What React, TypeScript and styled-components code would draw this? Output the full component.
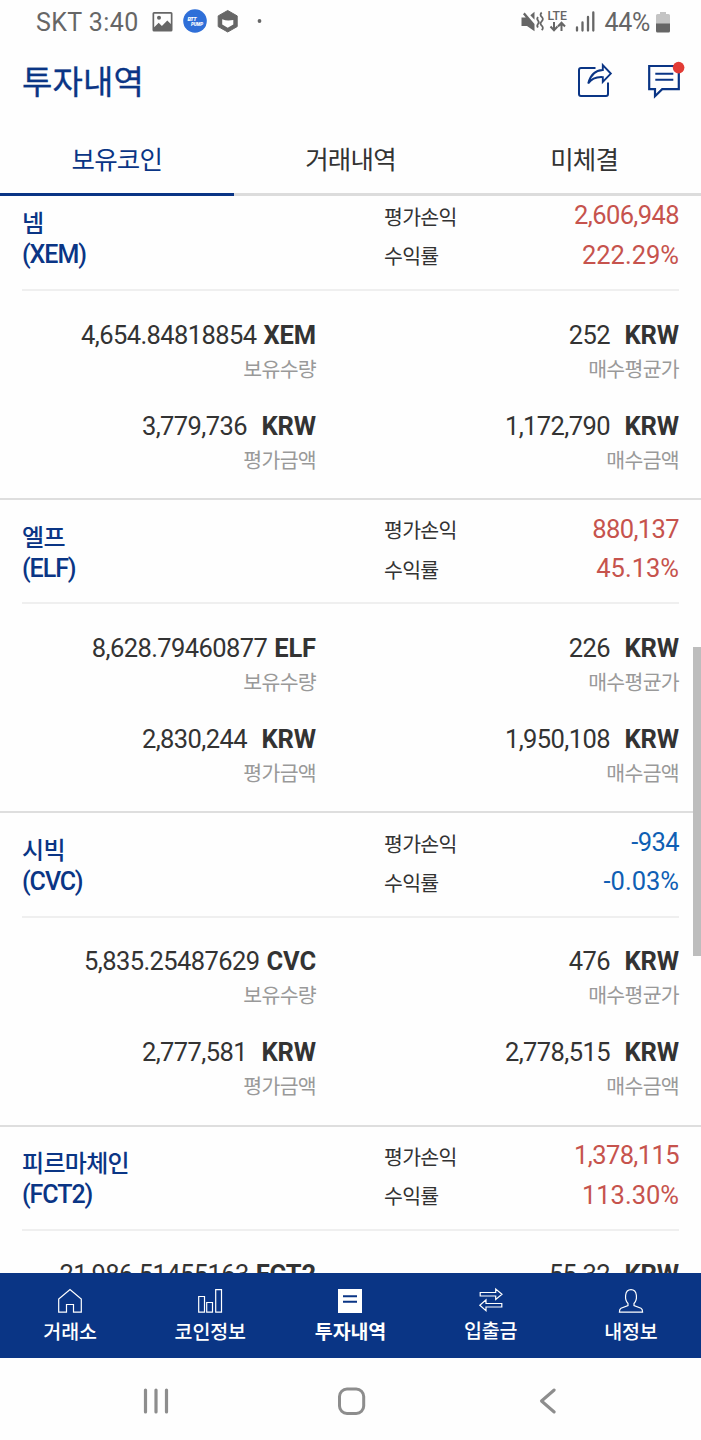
import React from 'react';
import styled, { createGlobalStyle } from 'styled-components';

const NAVY = '#0a3585';

const GlobalStyle = createGlobalStyle`
  * { box-sizing: border-box; }
  html, body { margin: 0; padding: 0; background: #fefefe; }
  body { font-family: Roboto, "Noto Sans CJK KR", sans-serif; color: #333; overflow: hidden; }
`;

const Screen = styled.div`
  position: relative;
  width: 701px;
  height: 1440px;
  display: flex;
  flex-direction: column;
  background: #fefefe;
  overflow: hidden;
`;

const StatusBar = styled.div`
  height: 44px;
  flex: none;
  display: flex;
  align-items: center;
  justify-content: space-between;
  padding: 0 31px 0 36px;
  color: #666;
  font-size: 25px;
  line-height: 44px;
`;

const StatusGroup = styled.div`
  display: flex;
  align-items: center;
  height: 44px;
  svg { display: block; flex: none; }
`;

const Carrier = styled.span`
  margin-right: 13px;
  padding-top: 2px;
  letter-spacing: 0.42px;
  white-space: pre;
`;

const BatteryLevel = styled.span`
  margin: 0 6px 0 7px;
  padding-top: 2px;
  letter-spacing: -0.3px;
`;

const Header = styled.header`
  height: 80px;
  flex: none;
  display: flex;
  justify-content: space-between;
  align-items: flex-start;
  padding: 0 15px 0 22px;
`;

const Title = styled.h1`
  margin: 17px 0 0;
  font-size: 33px;
  line-height: 44px;
  font-weight: 400;
  letter-spacing: 0.1px;
  color: ${NAVY};
  -webkit-text-stroke: 0.3px ${NAVY};
`;

const HeaderActions = styled.div`
  display: flex;
  gap: 33px;
  padding-top: 14px;
  svg { display: block; }
`;

const Tabs = styled.nav`
  height: 72px;
  flex: none;
  display: grid;
  grid-template-columns: repeat(3, 1fr);
`;

const Tab = styled.div<{ $active?: boolean }>`
  padding-top: 3px;
  border-bottom: 3px solid ${p => (p.$active ? NAVY : '#dcdcdc')};
  color: ${p => (p.$active ? NAVY : '#333')};
  text-align: center;
  font-size: 25.5px;
  line-height: 66px;
  letter-spacing: -0.8px;
`;

const ListArea = styled.main`
  flex: 1;
  min-height: 0;
  overflow: hidden;
`;

const CoinList = styled.div`
  margin-top: -9.33px;
`;

const Card = styled.section`
  height: 313.33px;
  border-bottom: 2px solid #dedede;
`;

const Summary = styled.div`
  height: 104.33px;
  margin: 0 22px;
  border-bottom: 2px solid #efefef;
  display: grid;
  grid-template-columns: 362px 1fr auto;
`;

const CoinName = styled.div`
  padding-top: 22.5px;
  color: ${NAVY};
  font-size: 24px;
  line-height: 31px;
  font-weight: 500;
  letter-spacing: -0.7px;
`;

const CoinCode = styled.div`
  font-size: 25px;
  line-height: 30px;
  letter-spacing: -1.05px;
`;

const Labels = styled.div`
  padding-top: 12.3px;
  font-size: 20.5px;
  line-height: 39.5px;
  letter-spacing: -0.7px;
`;

const Results = styled.div<{ $loss?: boolean }>`
  padding-top: 9.5px;
  text-align: right;
  font-size: 25.5px;
  line-height: 39.5px;
  color: ${p => (p.$loss ? '#0f5fb4' : '#c6534d')};
`;

const Profit = styled.div`
  letter-spacing: -0.6px;
`;

const Rate = styled.div`
  letter-spacing: 0;
`;

const Details = styled.div`
  display: grid;
  grid-template-columns: 294px 1fr;
  row-gap: 21px;
  padding: 25.5px 22px 0;
  text-align: right;
`;

const Amount = styled.div`
  font-size: 25.5px;
  line-height: 36px;
  letter-spacing: -0.6px;
  white-space: nowrap;
`;

const Unit = styled.b<{ $wide?: boolean }>`
  margin-left: ${p => (p.$wide ? 14.5 : 7)}px;
  font-weight: 700;
  letter-spacing: -0.1px;
`;

const Caption = styled.div`
  font-size: 20.5px;
  line-height: 34px;
  letter-spacing: -0.7px;
  color: #999;
`;

const ScrollThumb = styled.div`
  position: absolute;
  right: 0;
  top: 647px;
  width: 8px;
  height: 309px;
  background: #bdbdbd;
`;

const BottomNav = styled.nav`
  height: 85px;
  flex: none;
  display: grid;
  grid-template-columns: repeat(5, 1fr);
  background: ${NAVY};
`;

const NavItem = styled.div<{ $active?: boolean; $raised?: boolean }>`
  display: flex;
  flex-direction: column;
  align-items: center;
  padding-top: ${p => (p.$raised ? 13 : 14)}px;
  color: #fff;
  font-size: 19.5px;
  line-height: 32px;
  letter-spacing: -0.1px;
  font-weight: ${p => (p.$active ? 700 : 500)};
  svg { display: block; margin-bottom: 2px; }
`;

const SystemBar = styled.div`
  height: 82px;
  flex: none;
  display: grid;
  grid-template-columns: 195px 1fr 195px;
  justify-content: center;
  align-items: center;
  padding: 4px 58px 0;
  svg { display: block; margin: 0 auto; }
`;

type Coin = {
  name: string; code: string; profit: string; rate: string; loss?: boolean;
  amount: string; average: string; value?: string; cost?: string;
};

const coins: Coin[] = [
  { name: '넴', code: 'XEM', profit: '2,606,948', rate: '222.29%', amount: '4,654.84818854', average: '252', value: '3,779,736', cost: '1,172,790' },
  { name: '엘프', code: 'ELF', profit: '880,137', rate: '45.13%', amount: '8,628.79460877', average: '226', value: '2,830,244', cost: '1,950,108' },
  { name: '시빅', code: 'CVC', profit: '-934', rate: '-0.03%', loss: true, amount: '5,835.25487629', average: '476', value: '2,777,581', cost: '2,778,515' },
  { name: '피르마체인', code: 'FCT2', profit: '1,378,115', rate: '113.30%', amount: '21,986.51455163', average: '55.32' },
];

const Detail = ({ amount, unit, wide, caption }: { amount: string; unit: string; wide?: boolean; caption?: string }) => (
  <div>
    <Amount>{amount}<Unit $wide={wide}>{unit}</Unit></Amount>
    {caption && <Caption>{caption}</Caption>}
  </div>
);

const CoinCard = ({ coin }: { coin: Coin }) => (
  <Card>
    <Summary>
      <CoinName>{coin.name}<CoinCode>({coin.code})</CoinCode></CoinName>
      <Labels><div>평가손익</div><div>수익률</div></Labels>
      <Results $loss={coin.loss}><Profit>{coin.profit}</Profit><Rate>{coin.rate}</Rate></Results>
    </Summary>
    <Details>
      <Detail amount={coin.amount} unit={coin.code} caption={coin.value && '보유수량'} />
      <Detail amount={coin.average} unit="KRW" wide caption={coin.value && '매수평균가'} />
      {coin.value && <Detail amount={coin.value} unit="KRW" wide caption="평가금액" />}
      {coin.cost && <Detail amount={coin.cost} unit="KRW" wide caption="매수금액" />}
    </Details>
  </Card>
);

const StatusLeftIcons = () => (
  <svg width="112" height="30" viewBox="0 0 112 30">
    <path fill="#666" fillRule="evenodd" d="M2 5h17q1.500 0 1.500 1.500v16.500q0 1.500-1.500 1.500H2q-1.500 0-1.500-1.500V6.500Q.5 5 2 5zM2.200 6.700v13.600l4.500-4.500 3.200 3.100 5.400-5.500 3.500 3.500V6.700zM7 8.800a2 2 0 1 1 0 4 2 2 0 0 1 0-4z" />
    <circle cx="43" cy="14" r="11.800" fill="#2f6fd8" />
    <text x="35.500" y="13.500" fill="#fff" fontSize="5.500" fontWeight="900" fontStyle="italic" textLength="9">BTT</text>
    <text x="39" y="19" fill="#fff" fontSize="4.500" fontWeight="900" fontStyle="italic" textLength="12">PUMP</text>
    <path d="M75.700 3.500l9.500 5.400v10.700l-9.500 5.400-9.500-5.400V8.900z" fill="#666" stroke="#666" strokeWidth="1" strokeLinejoin="round" />
    <path d="M70.200 12.300q3.500 1.300 6.300 1.200 2.500-.4 4.800-.4v4.400l-5.600 3.200-5.500-3.200z" fill="#fefefe" />
    <circle cx="107.500" cy="14" r="1.900" fill="#666" />
  </svg>
);

const StatusRightIcons = () => (
  <svg width="76" height="30" viewBox="0 0 76 30" fill="none">
    <path d="M.5 10.500h4.300L2 7.200l1.700-1.700L13.500 17v7.300L6 19H.5z" fill="#666" />
    <path d="M9.300 8.300l4.200-3.500v8z" fill="#666" />
    <path d="M17 10q-1.500 1.800 0 3.500t0 3.500 0 3.500M20.700 5.500q-2.300 2.200 0 4.400t0 4.400 0 4.400 0 4.400" stroke="#666" strokeWidth="1.800" />
    <text x="26.500" y="13" fill="#666" fontSize="13" fontWeight="500" textLength="19.500" lengthAdjust="spacingAndGlyphs">LTE</text>
    <path d="M33 15v8M29.500 19.500l3.500 3.800 3.500-3.800M40.500 24v-8M37 19.500l3.500-3.800 3.500 3.800" stroke="#666" strokeWidth="2" />
    <path d="M56 20.500v3M61.500 15.500v8M67 10v13.500M72.300 5.500v18" stroke="#666" strokeWidth="2.300" strokeLinecap="round" />
  </svg>
);

const Battery = () => (
  <svg width="14" height="22" viewBox="0 0 14 22">
    <path d="M4 3V1h6v2h2.500Q14 3 14 4.500V13H0V4.500Q0 3 1.500 3z" fill="#c4c4c4" />
    <path d="M0 12.500h14v7.500q0 1.500-1.500 1.500h-11Q0 21.500 0 20z" fill="#666" />
  </svg>
);

const ShareIcon = () => (
  <svg width="36" height="42" viewBox="0 0 36 42" fill="none" stroke={NAVY} strokeWidth="2">
    <path d="M18.500 10H4Q2 10 2 12v24q0 2 2 2h25q2 0 2-2V24.500" strokeLinejoin="round" />
    <path d="M11.200 25.500Q14.500 12.500 25.800 12V7.200l8 8.400-8 8.200v-4.700q-10-.6-14.600 6.400z" strokeWidth="1.900" />
  </svg>
);

const NoticeIcon = () => (
  <svg width="40" height="42" viewBox="0 0 40 42" fill="none">
    <path d="M3.200 8h29.600v23.200H16.200l-7.200 7v-7H3.200z" stroke={NAVY} strokeWidth="2.200" />
    <path d="M9.300 15.800h18M9.300 21.800h18" stroke={NAVY} strokeWidth="2" />
    <circle cx="32.600" cy="9.600" r="5.800" fill="#e23b35" />
  </svg>
);

const iconProps = { width: 30, height: 28, viewBox: '0 0 30 28', fill: 'none', stroke: '#fff', strokeWidth: 1.2 };

export default function App() {
  return (
    <>
      <GlobalStyle />
      <Screen>
        <StatusBar>
          <StatusGroup>
            <Carrier>SKT 3:40</Carrier>
            <StatusLeftIcons />
          </StatusGroup>
          <StatusGroup>
            <StatusRightIcons />
            <BatteryLevel>44%</BatteryLevel>
            <Battery />
          </StatusGroup>
        </StatusBar>
        <Header>
          <Title>투자내역</Title>
          <HeaderActions><ShareIcon /><NoticeIcon /></HeaderActions>
        </Header>
        <Tabs>
          <Tab $active>보유코인</Tab>
          <Tab>거래내역</Tab>
          <Tab>미체결</Tab>
        </Tabs>
        <ListArea>
          <CoinList>{coins.map(c => <CoinCard key={c.code} coin={c} />)}</CoinList>
        </ListArea>
        <BottomNav>
          <NavItem>
            <svg {...iconProps}><path d="M3.700 25.200V12L15 2.500 26.300 12v13.200h-7.800v-7.700h-7v7.700z" /></svg>
            거래소
          </NavItem>
          <NavItem>
            <svg {...iconProps}><path d="M3.700 9.500h5.800v15.700H3.700zM11.700 15.500h5.800v9.700h-5.800zM20.700 2.700h5.800v22.500h-5.800z" /></svg>
            코인정보
          </NavItem>
          <NavItem $active>
            <svg {...iconProps}><path d="M3 2h24v24H3z" fill="#fff" stroke="none" /><path d="M8 9.200h14M8 14.800h14" stroke={NAVY} strokeWidth="2" /></svg>
            투자내역
          </NavItem>
          <NavItem $raised>
            <svg {...iconProps}><path d="M4.200 6.500h15.500V3l6.300 5.200-6.300 5.200V10H4.200zM25.800 21H10v3.700L3.800 19.200 10 13.800v3.700h15.800z" /></svg>
            입출금
          </NavItem>
          <NavItem>
            <svg {...iconProps}><path d="M12 16.500C8.500 13 8.200 2.700 15 2.700s6.500 10.300 3 13.800v2l7 2.700q1.600.8 1.600 4H3.400q0-3.200 1.600-4l7-2.700z" /></svg>
            내정보
          </NavItem>
        </BottomNav>
        <SystemBar>
          <svg width="30" height="30" viewBox="0 0 30 30" stroke="#8d8d8d" strokeWidth="3.200" strokeLinecap="round"><path d="M4.500 4v22M15 4v22M25.500 4v22" /></svg>
          <svg width="30" height="30" viewBox="0 0 30 30" fill="none" stroke="#8d8d8d" strokeWidth="3"><rect x="3.500" y="3" width="24.200" height="24.500" rx="7.500" /></svg>
          <svg width="30" height="30" viewBox="0 0 30 30" fill="none" stroke="#8d8d8d" strokeWidth="3" strokeLinecap="round" strokeLinejoin="round"><path d="M23.200 4L10.500 15l12.700 11" /></svg>
        </SystemBar>
        <ScrollThumb />
      </Screen>
    </>
  );
}
